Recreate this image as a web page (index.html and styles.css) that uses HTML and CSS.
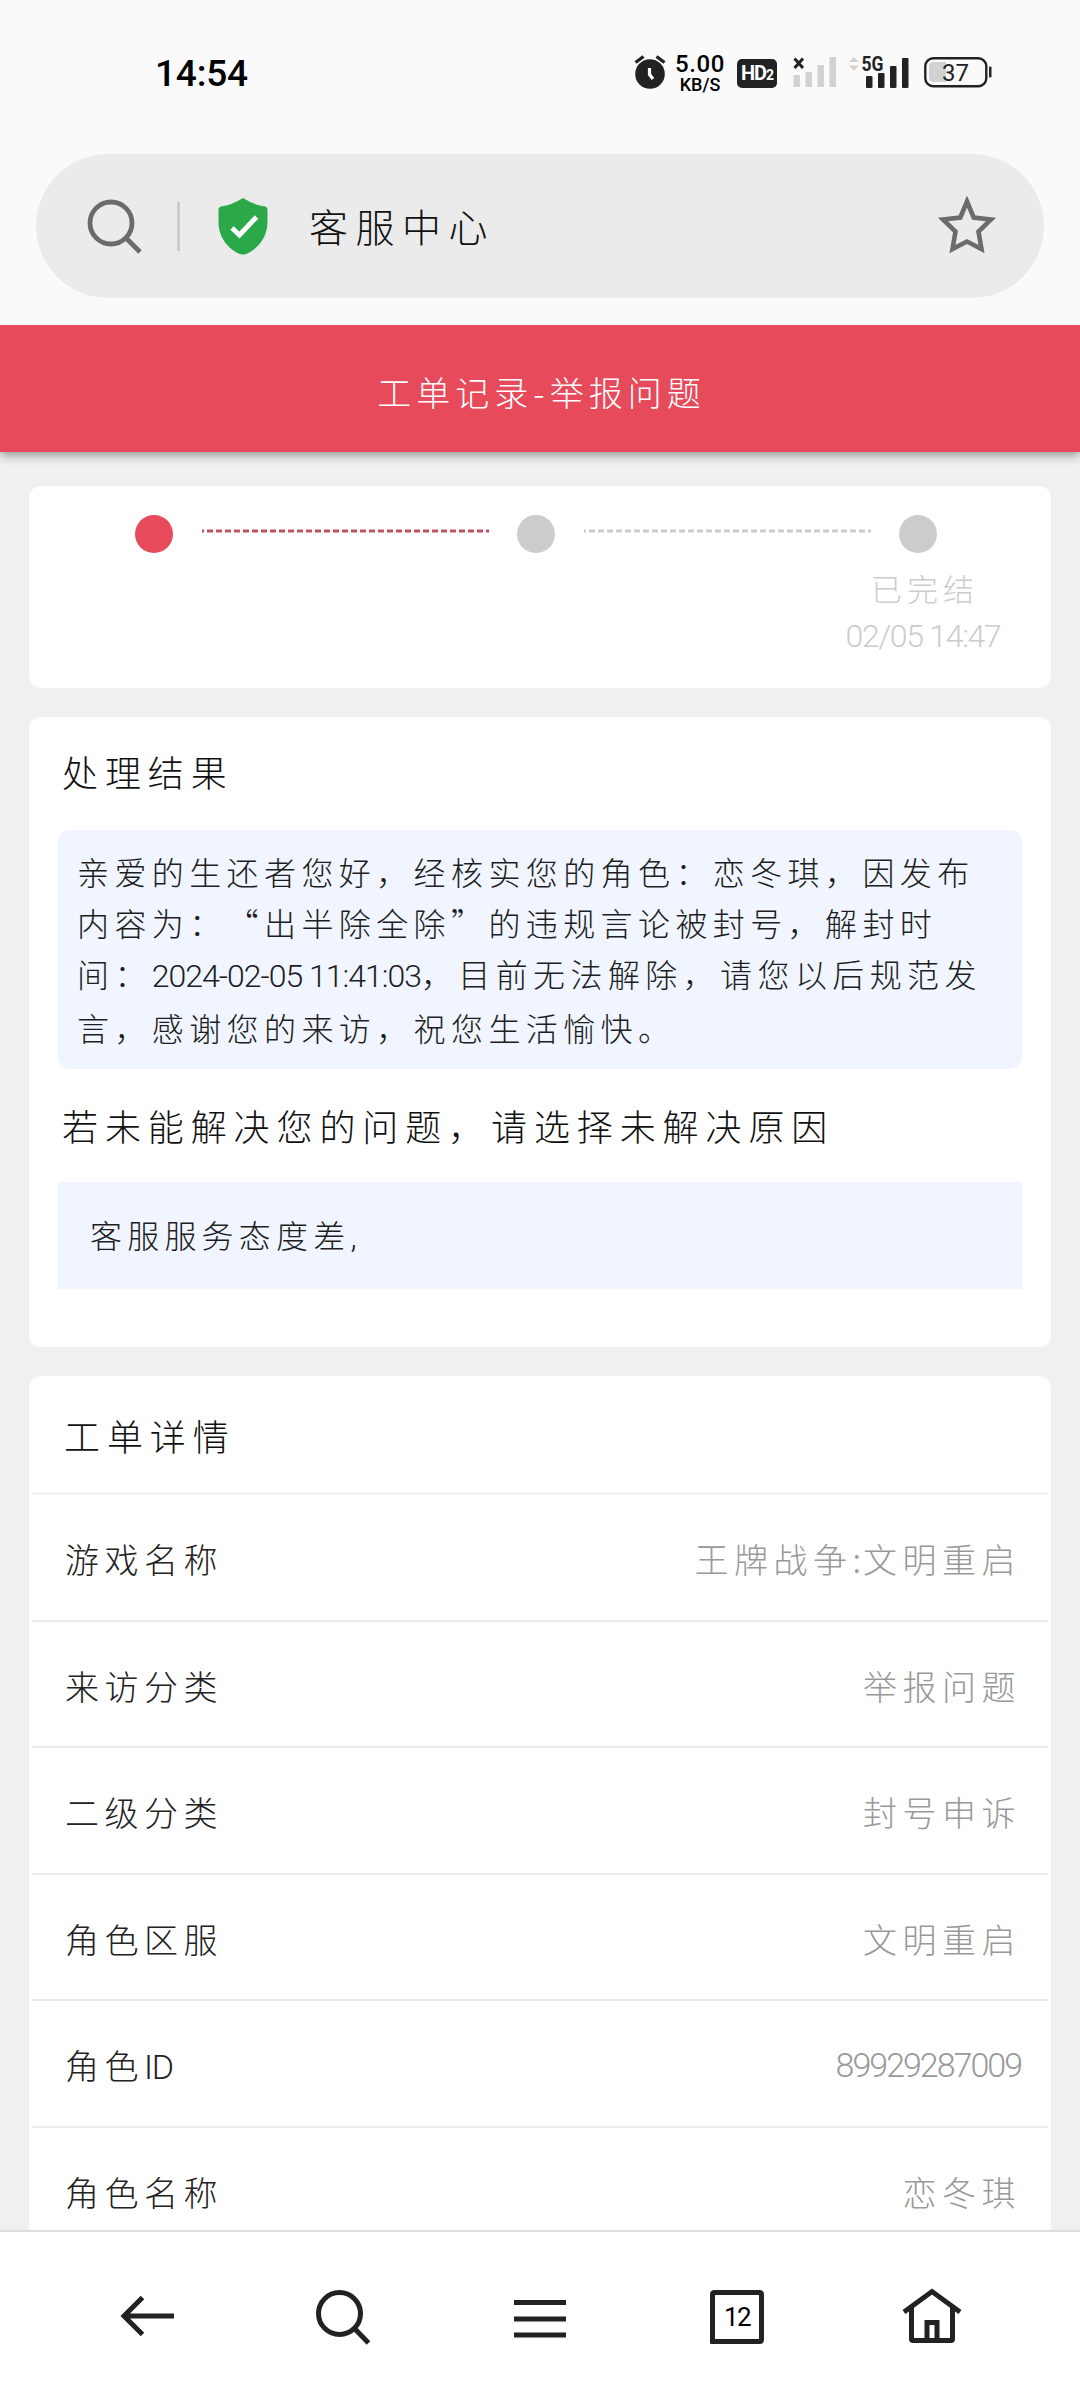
FILE: index.html
```html
<!DOCTYPE html>
<html lang="zh-CN">
<head>
    <meta charset="UTF-8">
    <meta name="viewport" content="width=device-width, initial-scale=1.0">
    <title>客服中心</title>
    <link rel="stylesheet" href="styles.css">
</head>
<body>

<div class="status-bar">
    <div class="clock">14:54</div>
    <div class="status-icons">
        <svg class="alarm" width="32" height="36" viewBox="0 0 32 36">
            <circle cx="16" cy="20" r="14.8" fill="#222"/>
            <path d="M1.5 8.5 L9.5 2.5 M30.5 8.5 L22.5 2.5" stroke="#222" stroke-width="3.4" fill="none"/>
            <path d="M15.5 14 V20.5 L19 25" stroke="#fff" stroke-width="3.2" fill="none"/>
        </svg>
        <div class="speed">
            <span class="speed-num">5.00</span>
            <span class="speed-unit">KB/S</span>
        </div>
        <div class="hd">HD<small>2</small></div>
        <svg class="signal" width="44" height="32" viewBox="0 0 44 32">
            <path d="M1.5 2.5 L10 12 M10 2.5 L1.5 12" stroke="#222" stroke-width="3"/>
            <g fill="#d2d2d2">
                <rect x="0.5" y="19" width="6.5" height="12" rx="1"/>
                <rect x="12.5" y="16" width="6.5" height="15" rx="1"/>
                <rect x="24.5" y="9" width="6.5" height="22" rx="1"/>
                <rect x="36.5" y="1" width="6.5" height="30" rx="1"/>
            </g>
        </svg>
        <svg class="signal5g" width="62" height="38" viewBox="0 -4 62 38">
            <path d="M1 7 L6 2 L11 7 Z M1 10.5 L6 15.5 L11 10.5 Z" fill="#d2d2d2"/>
            <text x="13.5" y="16" class="net" textLength="22" lengthAdjust="spacingAndGlyphs">5G</text>
            <g fill="#222">
                <rect x="18" y="21" width="6.5" height="12" rx="1"/>
                <rect x="30" y="18" width="6.5" height="15" rx="1"/>
                <rect x="42" y="11" width="6.5" height="22" rx="1"/>
                <rect x="54" y="3" width="6.5" height="30" rx="1"/>
            </g>
        </svg>
        <svg class="battery" width="68" height="32" viewBox="0 0 68 32">
            <rect x="1.3" y="2.3" width="61" height="28" rx="8" fill="none" stroke="#222" stroke-width="2.4"/>
            <path d="M10 6 H22 V26 H10 Q5 26 5 21 V11 Q5 6 10 6 Z" fill="#d2d2d2"/>
            <rect x="65" y="10.5" width="2.5" height="11" rx="1" fill="#222"/>
            <text x="31.5" y="25" class="level" text-anchor="middle">37</text>
        </svg>
    </div>
</div>

<div class="address-bar">
    <svg class="search" width="56" height="56" viewBox="0 0 56 56">
        <circle cx="24" cy="25" r="21" fill="none" stroke="#6b6b6b" stroke-width="4.8"/>
        <path d="M39 40 L53 54" stroke="#6b6b6b" stroke-width="4.8"/>
    </svg>
    <div class="divider"></div>
    <svg class="shield" width="50" height="58" viewBox="0 0 50 58">
        <path d="M25 1 Q36 8 47 9.500 Q49.500 10 49.500 13 V25 C49.500 42 38 53 28 57 Q25 58 22 57 C12 53 0.500 42 0.500 25 V13 Q0.500 10 3 9.500 Q14 8 25 1 Z" fill="#2ba84a"/>
        <path d="M14 31 L21.500 38 L38.500 20" fill="none" stroke="#fff" stroke-width="4.8"/>
    </svg>
    <div class="site-title">客服中心</div>
    <svg class="star" width="60" height="60" viewBox="0 0 60 60">
        <path d="M30 5.500 L36.700 21.500 L54 23.500 L41.500 35.500 L44.500 53 L30 45.500 L15.500 53 L18.500 35.500 L6 23.500 L23.300 21.500 Z" fill="none" stroke="#6b6b6b" stroke-width="4.6"/>
    </svg>
</div>

<div class="page">
    <div class="header">工单记录-举报问题</div>

    <div class="card progress">
        <div class="steps">
            <div class="dot active"></div>
            <svg class="line" width="287" height="4"><path d="M0 2 H287" stroke="#c25263" stroke-width="3" stroke-dasharray="6 3" stroke-dashoffset="4"/></svg>
            <div class="dot"></div>
            <svg class="line" width="287" height="4"><path d="M0 2 H287" stroke="#ccc" stroke-width="3" stroke-dasharray="6 3" stroke-dashoffset="4"/></svg>
            <div class="dot"></div>
        </div>
        <div class="step-info">
            <div class="step-name">已完结</div>
            <div class="step-time">02/05 14:47</div>
        </div>
    </div>

    <div class="card result">
        <h2>处理结果</h2>
        <p class="reply">亲爱的生还者您好，经核实您的角色：恋冬琪，因发布<br>内容为：“出半除全除”的违规言论被封号，解封时<br>间：<span class="num date">2024-02-05 11:41:03</span>，目前无法解除，请您以后规范发<br>言，感谢您的来访，祝您生活愉快。</p>
        <h2>若未能解决您的问题，请选择未解决原因</h2>
        <div class="reason">客服服务态度差<span class="num">,</span></div>
    </div>

    <div class="card details">
        <h2>工单详情</h2>
        <div class="row"><span class="label">游戏名称</span><span class="value">王牌战争<span class="colon">:</span>文明重启</span></div>
        <div class="row"><span class="label">来访分类</span><span class="value">举报问题</span></div>
        <div class="row"><span class="label">二级分类</span><span class="value">封号申诉</span></div>
        <div class="row"><span class="label">角色区服</span><span class="value">文明重启</span></div>
        <div class="row"><span class="label">角色<span class="num">ID</span></span><span class="value num">89929287009</span></div>
        <div class="row"><span class="label">角色名称</span><span class="value">恋冬琪</span></div>
    </div>
</div>

<div class="nav-bar">
    <svg width="60" height="60" viewBox="0 0 60 60">
        <path d="M6 30 H57 M25.500 11.500 L7 30 L25.500 48.500"/>
    </svg>
    <svg width="60" height="60" viewBox="0 0 60 60">
        <circle cx="26.5" cy="27.5" r="21"/>
        <path d="M41.500 42.500 L55.500 57"/>
    </svg>
    <svg width="60" height="60" viewBox="0 0 60 60">
        <path d="M4 16.500 H56 M4 33 H56 M4 49 H56"/>
    </svg>
    <svg width="60" height="60" viewBox="0 0 60 60">
        <path d="M6.500 57.500 V8.500 Q6.500 6.500 8.500 6.500 H53.500 Q55.500 6.500 55.500 8.500 V53.500 Q55.500 55.500 53.500 55.500 H4.500"/>
        <text x="31" y="40" class="tab-count" text-anchor="middle">12</text>
    </svg>
    <svg width="60" height="60" viewBox="0 0 60 60">
        <path d="M2 26 L30 5.500 L58 26 M9.500 21 V53 Q9.500 54.500 11 54.500 H49 Q50.500 54.500 50.500 53 V21 M25 54 V36.500 H35 V54"/>
    </svg>
</div>

</body>
</html>
```
FILE: styles.css
```css
* {
    box-sizing: border-box;
}
body {
    margin: 0;
    width: 1080px;
    height: 2400px;
    overflow: hidden;
    display: flex;
    flex-direction: column;
    background-color: #fafafa;
    font-family: "Noto Sans CJK SC", sans-serif;
    font-weight: 300;
    text-spacing-trim: space-all;
}
svg {
    display: block;
    flex: none;
}

/* status bar */
.status-bar {
    height: 154px;
    flex: none;
    padding: 0 88px 10px 155px;
    display: flex;
    justify-content: space-between;
    align-items: center;
    font-family: Roboto, sans-serif;
    color: #000;
}
.clock {
    font-size: 37px;
    font-weight: 500;
    letter-spacing: -0.2px;
    padding-top: 2px;
}
.status-icons {
    display: flex;
    align-items: center;
}
.speed {
    width: 52px;
    margin: 2px 11px 0 8px;
    text-align: center;
}
.speed span {
    display: block;
    font-weight: 500;
}
.speed-num {
    font-size: 24px;
    letter-spacing: 0.6px;
    line-height: 22px;
}
.speed-unit {
    font-size: 18px;
    line-height: 19px;
}
.hd {
    width: 40px;
    height: 29px;
    margin: 2px 16px 0 0;
    border-radius: 5px;
    background-color: #222;
    color: #fff;
    font-size: 20px;
    font-weight: 700;
    line-height: 29px;
    letter-spacing: -1px;
    text-align: center;
}
.hd small {
    font-size: 14px;
}
.signal {
    margin-right: 11px;
}
.signal5g {
    margin: 0 14px 5px 0;
}
.net {
    font-size: 20px;
    font-weight: 700;
    fill: #222;
}
.level {
    font-size: 24px;
    font-weight: 400;
    fill: #222;
}

/* address bar */
.address-bar {
    height: 144px;
    flex: none;
    margin: 0 36px 27px;
    padding: 0 47px 0 51px;
    border-radius: 72px;
    background-color: #ebebeb;
    display: flex;
    align-items: center;
}
.divider {
    width: 3px;
    height: 49px;
    margin: 0 38px 0 34px;
    background-color: #ccc;
}
.site-title {
    flex: 1;
    margin-left: 41px;
    padding-bottom: 2px;
    font-size: 39px;
    letter-spacing: 7.5px;
    color: #111;
}

/* page */
.page {
    flex: 1;
    min-height: 0;
    overflow: hidden;
    background-color: #f0f0f0;
}
.header {
    height: 127px;
    margin-bottom: 34px;
    padding: 3px 0 0 3px;
    background-color: #e64a5b;
    box-shadow: 0 3px 10px rgba(0, 0, 0, 0.4);
    color: #fff;
    font-size: 34px;
    letter-spacing: 5px;
    line-height: 127px;
    text-align: center;
}
.card {
    margin: 0 29px 29px;
    border-radius: 12px;
    background-color: #fff;
}
h2 {
    margin: 0;
    font-size: 36px;
    font-weight: 300;
    letter-spacing: 6.9px;
    line-height: 52px;
    color: #111;
}
.num {
    font-family: Roboto, sans-serif;
    font-weight: 300;
    letter-spacing: -1.2px;
}
.progress {
    height: 202px;
    padding-top: 29px;
}
.steps {
    display: flex;
    justify-content: space-between;
    padding: 0 114px 0 106px;
}
.dot {
    width: 38px;
    height: 38px;
    border-radius: 50%;
    background-color: #ccc;
}
.dot.active {
    background-color: #e64a5b;
}
.line {
    margin-top: 14px;
}
.step-info {
    width: 160px;
    margin: 11px 48px 0 auto;
    text-align: center;
    color: #ccc;
}
.step-name {
    padding-left: 4px;
    font-size: 31px;
    letter-spacing: 5px;
    line-height: 48px;
}
.step-time {
    font-family: Roboto, sans-serif;
    font-size: 32px;
    letter-spacing: -1.3px;
    line-height: 48px;
    white-space: nowrap;
}
.result {
    height: 630px;
    padding: 28px 29px 0;
}
.result h2 {
    padding-left: 4px;
}
.reply {
    height: 239px;
    margin: 33px 0 30px;
    padding: 16px 0 0 19px;
    border-radius: 12px;
    background-color: #f0f5ff;
    color: #1d1d22;
    font-size: 32px;
    letter-spacing: 5.4px;
    line-height: 51px;
    white-space: nowrap;
}
.date {
    letter-spacing: -1px;
}
.reason {
    height: 107px;
    margin-top: 31px;
    padding-left: 32px;
    background-color: #f0f5ff;
    color: #1d1d22;
    font-size: 32px;
    letter-spacing: 5.2px;
    line-height: 105px;
}
.details {
    margin-bottom: 0;
    padding: 0 3px;
}
.details h2 {
    height: 119px;
    padding-left: 32px;
    border-bottom: 3px solid #f5f5f5;
    line-height: 118px;
}
.row {
    height: 126.5px;
    padding: 3px 27px 0 33px;
    border-bottom: 2px solid #ebebeb;
    display: flex;
    justify-content: space-between;
    align-items: center;
    font-size: 34px;
    letter-spacing: 5.5px;
}
.label {
    color: #222;
}
.value {
    color: #999;
}
.value.num {
    letter-spacing: -2px;
}
.colon {
    letter-spacing: 2px;
}

/* bottom navigation */
.nav-bar {
    height: 170px;
    flex: none;
    padding: 54px 118px 0 117px;
    border-top: 2px solid #ddd;
    background-color: #fff;
    display: flex;
    justify-content: space-between;
}
.nav-bar path,
.nav-bar circle {
    fill: none;
    stroke: #222;
    stroke-width: 5;
}
.tab-count {
    font-family: Roboto, sans-serif;
    font-size: 26px;
    font-weight: 400;
    letter-spacing: -1.5px;
}
```
